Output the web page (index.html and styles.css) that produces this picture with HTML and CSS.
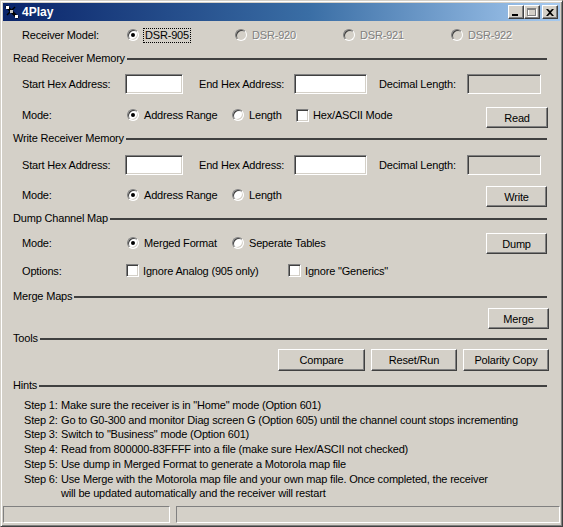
FILE: index.html
```html
<!DOCTYPE html>
<html>
<head>
<meta charset="utf-8">
<title>4Play</title>
<link rel="stylesheet" href="styles.css">
</head>
<body>
<div class="window">
  <div class="titlebar">
    <svg class="appicon" width="16" height="16" viewBox="0 0 16 16">
      <path d="M2 2 L14 14" stroke="#000" stroke-width="3"/>
      <path d="M11 3 L3 11" stroke="#000" stroke-width="1.5"/>
      <rect x="2" y="2" width="3" height="3" fill="#fff"/>
      <rect x="6" y="6" width="3" height="3" fill="#c0c0c0"/>
      <rect x="11" y="11" width="3" height="3" fill="#fff"/>
    </svg>
    <span class="title">4Play</span>
    <div class="tbtns">
      <div class="tbtn"><svg width="8" height="7" viewBox="0 0 8 7"><rect x="0" y="5" width="6" height="2" fill="#000"/></svg></div>
      <div class="tbtn"><svg width="10" height="9" viewBox="0 0 10 9"><rect x="1.5" y="1.5" width="8" height="7" fill="none" stroke="#fff"/><rect x="0.5" y="0.5" width="8" height="7" fill="none" stroke="#808080"/><rect x="0" y="0" width="9" height="2" fill="#808080"/></svg></div>
      <div class="tbtn gap"><svg width="8" height="7" viewBox="0 0 8 7"><path d="M0 0 L2 0 L4 2 L6 0 L8 0 L5 3.5 L8 7 L6 7 L4 5 L2 7 L0 7 L3 3.5 Z" fill="#000"/></svg></div>
    </div>
  </div>

  <div class="content">
    <div class="row r28">
      <span class="lbl w105">Receiver Model:</span>
      <span class="opt w108"><span class="radio on"></span><span class="focus">DSR-905</span></span>
      <span class="opt w108 dis"><span class="radio off"></span><span>DSR-920</span></span>
      <span class="opt w108 dis"><span class="radio off"></span><span>DSR-921</span></span>
      <span class="opt dis"><span class="radio off"></span><span>DSR-922</span></span>
    </div>

    <div class="hdr h18"><span>Read Receiver Memory</span><i class="line"></i></div>
    <div class="row r34">
      <span class="lbl w103">Start Hex Address:</span>
      <span class="field w58"></span>
      <span class="lbl lbl-end">End Hex Address:</span>
      <span class="field w73"></span>
      <span class="lbl lbl-dec">Decimal Length:</span>
      <span class="field w74 off"></span>
    </div>
    <div class="row r28">
      <span class="lbl w105">Mode:</span>
      <span class="opt w105"><span class="radio on"></span><span>Address Range</span></span>
      <span class="opt w64"><span class="radio"></span><span>Length</span></span>
      <span class="opt"><span class="check"></span><span>Hex/ASCII Mode</span></span>
      <span class="btn b-read">Read</span>
    </div>

    <div class="hdr h18"><span>Write Receiver Memory</span><i class="line"></i></div>
    <div class="row r36">
      <span class="lbl w103">Start Hex Address:</span>
      <span class="field w58"></span>
      <span class="lbl lbl-end">End Hex Address:</span>
      <span class="field w73"></span>
      <span class="lbl lbl-dec">Decimal Length:</span>
      <span class="field w74 off"></span>
    </div>
    <div class="row r24">
      <span class="lbl w105">Mode:</span>
      <span class="opt w105"><span class="radio on"></span><span>Address Range</span></span>
      <span class="opt w64"><span class="radio"></span><span>Length</span></span>
      <span class="btn b-write">Write</span>
    </div>

    <div class="hdr h22"><span>Dump Channel Map</span><i class="line"></i></div>
    <div class="row r28">
      <span class="lbl w105">Mode:</span>
      <span class="opt w105"><span class="radio on"></span><span>Merged Format</span></span>
      <span class="opt"><span class="radio"></span><span>Seperate Tables</span></span>
      <span class="btn b-dump">Dump</span>
    </div>
    <div class="row r27">
      <span class="lbl w104">Options:</span>
      <span class="opt w162"><span class="check"></span><span>Ignore Analog (905 only)</span></span>
      <span class="opt"><span class="check"></span><span>Ignore "Generics"</span></span>
    </div>

    <div class="hdr h24"><span>Merge Maps</span><i class="line"></i></div>
    <div class="row r21 end">
      <span class="btn b-merge">Merge</span>
    </div>

    <div class="hdr h18"><span>Tools</span><i class="line"></i></div>
    <div class="row r25 end tools">
      <span class="btn b-tool w87">Compare</span>
      <span class="btn b-tool w86">Reset/Run</span>
      <span class="btn b-tool w86">Polarity Copy</span>
    </div>

    <div class="hdr h26"><span>Hints</span><i class="line"></i></div>
    <div class="steps">
      <span class="sn">Step 1:</span><span>Make sure the receiver is in "Home" mode (Option 601)</span>
      <span class="sn">Step 2:</span><span>Go to G0-300 and monitor Diag screen G (Option 605) until the channel count stops incrementing</span>
      <span class="sn">Step 3:</span><span>Switch to "Business" mode (Option 601)</span>
      <span class="sn">Step 4:</span><span>Read from 800000-83FFFF into a file (make sure Hex/ASCII not checked)</span>
      <span class="sn">Step 5:</span><span>Use dump in Merged Format to generate a Motorola map file</span>
      <span class="sn">Step 6:</span><span>Use Merge with the Motorola map file and your own map file. Once completed, the receiver<br>will be updated automatically and the receiver will restart</span>
    </div>
  </div>

  <div class="status">
    <div class="panel p1"></div>
    <div class="panel p2"></div>
  </div>
</div>
</body>
</html>
```

FILE: styles.css
```css
html, body {
  margin: 0;
  padding: 0;
  background: #d4d0c8;
}

body {
  font-family: "Liberation Sans", Arial, sans-serif;
  font-size: 11px;
  letter-spacing: -0.18px;
  color: #000;
}

.window {
  width: 563px;
  height: 527px;
  box-sizing: border-box;
  border: 1px solid;
  border-color: #d4d0c8 #404040 #404040 #d4d0c8;
  box-shadow: inset 1px 1px #fff, inset -1px -1px #808080;
  padding: 2px;
  background: #d4d0c8;
  display: flex;
  flex-direction: column;
}

.titlebar {
  height: 18px;
  flex: none;
  display: flex;
  align-items: center;
  background: linear-gradient(to right, #0a246a 0%, #3a6ea5 55%, #a6caf0 100%);
  padding: 0 2px 0 1px;
}

.appicon {
  flex: none;
  width: 16px;
  height: 16px;
}

.title {
  color: #fff;
  font-weight: bold;
  font-size: 12px;
  letter-spacing: 0;
  margin-left: 2px;
  flex: 1;
}

.tbtns {
  display: flex;
  align-items: center;
}

.tbtn {
  width: 16px;
  height: 14px;
  box-sizing: border-box;
  background: #d4d0c8;
  border: 1px solid;
  border-color: #fff #404040 #404040 #fff;
  box-shadow: inset -1px -1px #808080;
  display: flex;
  align-items: center;
  justify-content: center;
}

.tbtn.gap {
  margin-left: 2px;
}

.content {
  flex: 1;
  display: flex;
  flex-direction: column;
}

.row {
  display: flex;
  align-items: center;
  padding-left: 19px;
  padding-right: 11px;
  flex: none;
}

.r21 { height: 21px; }
.r24 { height: 24px; }
.r25 { height: 25px; }
.r27 { height: 27px; }
.r28 { height: 28px; }
.r34 { height: 34px; }
.r36 { height: 36px; }

.end { justify-content: flex-end; }

.lbl { white-space: nowrap; flex: none; }
.w103 { width: 103px; }
.w104 { width: 104px; }
.w105 { width: 105px; }
.w108 { width: 108px; }
.w162 { width: 162px; }
.w64 { width: 64px; }
.w58 { width: 58px; }
.w73 { width: 73px; }
.w74 { width: 74px; }
.w86 { width: 86px; }
.w87 { width: 87px; }

.lbl-end { margin-left: 16px; width: 95px; }
.lbl-dec { margin-left: 12px; width: 88px; }

.opt {
  display: flex;
  align-items: center;
  flex: none;
  white-space: nowrap;
}

.radio {
  width: 12px;
  height: 12px;
  box-sizing: border-box;
  border-radius: 50%;
  border: 1px solid;
  border-color: #808080 #fff #fff #808080;
  box-shadow: inset 1px 1px #404040, inset -1px -1px #d4d0c8;
  background: #fff;
  margin-right: 5px;
  position: relative;
  flex: none;
}

.radio.on::after {
  content: "";
  position: absolute;
  left: 3px;
  top: 3px;
  width: 4px;
  height: 4px;
  border-radius: 50%;
  background: #000;
}

.radio.off {
  background: #d4d0c8;
}

.dis {
  color: #808080;
  text-shadow: 1px 1px 0 #fff;
}

.focus {
  outline: 1px dotted #000;
  outline-offset: 0;
  padding: 0 1px;
  line-height: 13px;
}

.check {
  width: 13px;
  height: 13px;
  box-sizing: border-box;
  border: 1px solid;
  border-color: #808080 #fff #fff #808080;
  box-shadow: inset 1px 1px #404040, inset -1px -1px #d4d0c8;
  background: #fff;
  margin-right: 4px;
  flex: none;
}

.field {
  height: 20px;
  box-sizing: border-box;
  border: 1px solid;
  border-color: #808080 #fff #fff #808080;
  box-shadow: inset 1px 1px #404040, inset -1px -1px #d4d0c8;
  background: #fff;
  flex: none;
}

.field.off {
  background: #d4d0c8;
}

.btn {
  box-sizing: border-box;
  background: #d4d0c8;
  border: 1px solid;
  border-color: #fff #404040 #404040 #fff;
  box-shadow: inset -1px -1px #808080;
  display: flex;
  align-items: center;
  justify-content: center;
  white-space: nowrap;
  flex: none;
}

.b-read {
  margin-left: auto;
  width: 62px;
  height: 21px;
  align-self: flex-start;
  margin-top: 6px;
  margin-right: 1px;
}

.b-write {
  margin-left: auto;
  width: 61px;
  height: 21px;
  align-self: flex-start;
  margin-top: 3px;
  margin-right: 2px;
}

.b-dump {
  margin-left: auto;
  width: 61px;
  height: 21px;
  align-self: flex-start;
  margin-top: 4px;
  margin-right: 2px;
}

.b-merge {
  width: 61px;
  height: 21px;
}

.tools {
  gap: 6px;
}

.b-tool {
  height: 22px;
  align-self: flex-start;
  margin-top: 2px;
}

.hdr {
  display: flex;
  align-items: center;
  padding-left: 10px;
  padding-right: 13px;
  flex: none;
  white-space: nowrap;
}

.h18 { height: 18px; }
.h22 { height: 22px; }
.h24 { height: 24px; }
.h26 { height: 26px; }

.line {
  flex: 1;
  height: 2px;
  background: #404040;
  margin-left: 2px;
  margin-top: 1px;
}

.steps {
  display: grid;
  grid-template-columns: 37px auto;
  padding-left: 21px;
  line-height: 14.7px;
  white-space: nowrap;
}

.status {
  height: 17px;
  flex: none;
  display: flex;
  gap: 6px;
  margin-bottom: 1px;
}

.panel {
  box-sizing: border-box;
  height: 17px;
  border: 1px solid;
  border-color: #808080 #fff #fff #808080;
}

.p1 { width: 167px; }
.p2 { flex: 1; }
```
